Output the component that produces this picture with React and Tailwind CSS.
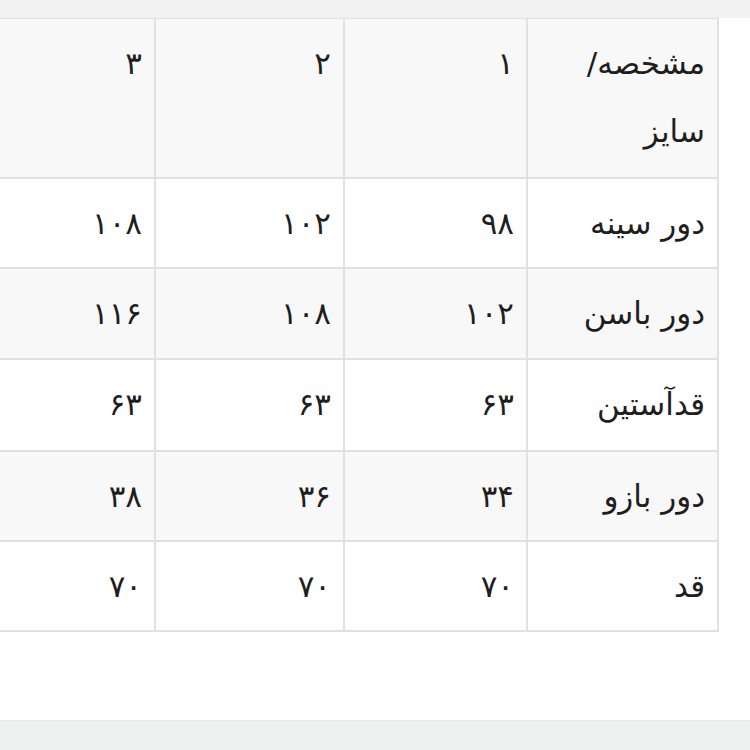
const rows = [
  { label: "مشخصه/ سایز", values: ["۱", "۲", "۳"], head: true, h: "h-[160px]" },
  { label: "دور سینه", values: ["۹۸", "۱۰۲", "۱۰۸"], h: "h-[90px]" },
  { label: "دور باسن", values: ["۱۰۲", "۱۰۸", "۱۱۶"], h: "h-[91px]" },
  { label: "قدآستین", values: ["۶۳", "۶۳", "۶۳"], h: "h-[92px]" },
  { label: "دور بازو", values: ["۳۴", "۳۶", "۳۸"], h: "h-[90px]" },
  { label: "قد", values: ["۷۰", "۷۰", "۷۰"], h: "h-[90px]" },
];

const cell =
  "border-2 border-[#e1e1e1] align-top text-right px-[12px] pt-[10px] pb-[10px] leading-[68px]";

export default function App() {
  return (
    <div
      className="w-[750px] h-[750px] bg-white flex flex-col overflow-hidden text-[#1e1e1e]"
      style={{ fontFamily: '"DejaVu Sans", "Noto Sans", sans-serif' }}
    >
      {/* top strip */}
      <div className="h-[18px] bg-[#f1f1f1] shrink-0" />

      {/* size table */}
      <div dir="rtl" className="pr-[31px] h-[702px] overflow-hidden">
        <table className="border-collapse table-fixed w-[763px] text-[31px] -mt-[1px]">
          <colgroup>
            <col className="w-[191px]" />
            <col className="w-[183px]" />
            <col className="w-[189px]" />
            <col className="w-[200px]" />
          </colgroup>
          <tbody>
            {rows.map((row, i) => (
              <tr
                key={row.label}
                className={i % 2 === 0 ? "bg-[#f8f8f8]" : "bg-white"}
              >
                <td className={`${cell} ${row.h}`}>
                  {row.head ? (
                    <>
                      مشخصه/
                      <br />
                      سایز
                    </>
                  ) : (
                    row.label
                  )}
                </td>
                {row.values.map((v, j) => (
                  <td key={j} className={cell}>
                    {v}
                  </td>
                ))}
              </tr>
            ))}
          </tbody>
        </table>
      </div>

      {/* bottom strip */}
      <div className="flex-1 bg-[#eff1f1] border-t border-[#e6eaea]" />
    </div>
  );
}
